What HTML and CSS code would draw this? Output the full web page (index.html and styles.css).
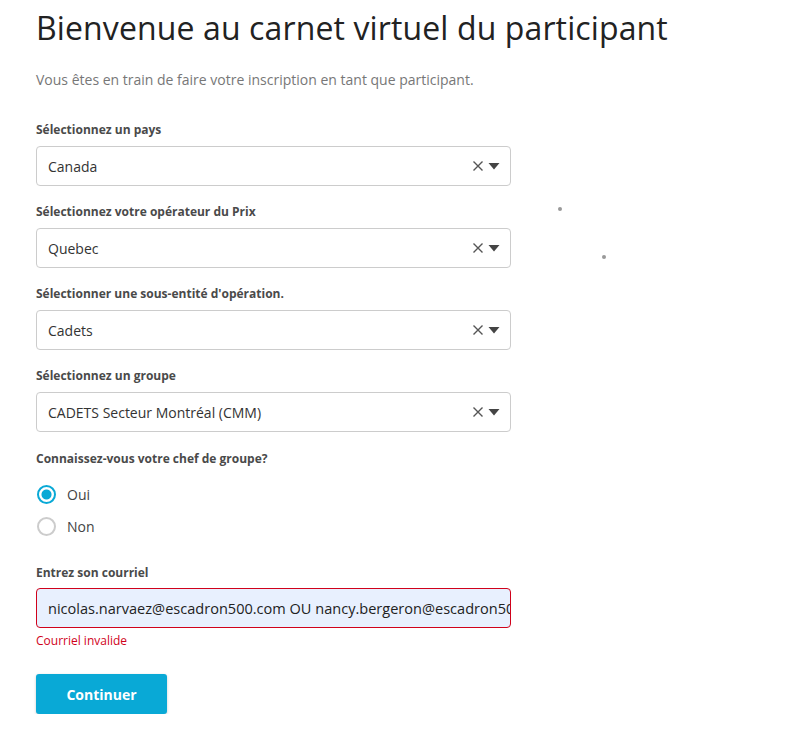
FILE: index.html
```html
<!DOCTYPE html>
<html lang="fr">
<head>
<meta charset="utf-8">
<title>Carnet virtuel</title>
<link rel="stylesheet" href="styles.css">
</head>
<body>
<main class="page">
  <h1 class="title">Bienvenue au carnet virtuel du participant</h1>
  <p class="intro">Vous êtes en train de faire votre inscription en tant que participant.</p>

  <div class="field">
    <label class="label">Sélectionnez un pays</label>
    <div class="select"><span class="value">Canada</span><span class="controls"><svg class="clear" width="12" height="12" viewBox="0 0 12 12"><path d="M1.5 1.5L10.5 10.5M10.5 1.5L1.5 10.5" stroke="#555" stroke-width="1.4"/></svg><svg class="caret" width="12" height="8" viewBox="0 0 12 8"><path d="M0.5 1H11.5L6 7.5Z" fill="#444"/></svg></span></div>
  </div>

  <div class="field">
    <label class="label">Sélectionnez votre opérateur du Prix</label>
    <div class="select"><span class="value">Quebec</span><span class="controls"><svg class="clear" width="12" height="12" viewBox="0 0 12 12"><path d="M1.5 1.5L10.5 10.5M10.5 1.5L1.5 10.5" stroke="#555" stroke-width="1.4"/></svg><svg class="caret" width="12" height="8" viewBox="0 0 12 8"><path d="M0.5 1H11.5L6 7.5Z" fill="#444"/></svg></span></div>
  </div>

  <div class="field">
    <label class="label">Sélectionner une sous-entité d'opération.</label>
    <div class="select"><span class="value">Cadets</span><span class="controls"><svg class="clear" width="12" height="12" viewBox="0 0 12 12"><path d="M1.5 1.5L10.5 10.5M10.5 1.5L1.5 10.5" stroke="#555" stroke-width="1.4"/></svg><svg class="caret" width="12" height="8" viewBox="0 0 12 8"><path d="M0.5 1H11.5L6 7.5Z" fill="#444"/></svg></span></div>
  </div>

  <div class="field">
    <label class="label">Sélectionnez un groupe</label>
    <div class="select"><span class="value">CADETS Secteur Montréal (CMM)</span><span class="controls"><svg class="clear" width="12" height="12" viewBox="0 0 12 12"><path d="M1.5 1.5L10.5 10.5M10.5 1.5L1.5 10.5" stroke="#555" stroke-width="1.4"/></svg><svg class="caret" width="12" height="8" viewBox="0 0 12 8"><path d="M0.5 1H11.5L6 7.5Z" fill="#444"/></svg></span></div>
  </div>

  <div class="field radios">
    <span class="label">Connaissez-vous votre chef de groupe?</span>
    <div class="radio checked"><span class="dot"></span><span>Oui</span></div>
    <div class="radio"><span class="dot"></span><span>Non</span></div>
  </div>

  <div class="field email">
    <label class="label">Entrez son courriel</label>
    <div class="input invalid"><span class="input-text">nicolas.narvaez@escadron500.com OU nancy.bergeron@escadron500.com</span></div>
    <div class="error">Courriel invalide</div>
  </div>

  <button class="btn">Continuer</button>

  <span class="speck s1"></span>
  <span class="speck s2"></span>
</main>
</body>
</html>
```

FILE: styles.css
```css
html, body {
  margin: 0;
  padding: 0;
  background: #fff;
}
body {
  font-family: "Open Sans", "Noto Sans", sans-serif;
  color: #333;
}
.page {
  position: relative;
  padding: 0 0 0 36px;
  width: 475px;
}
.title {
  margin: 0;
  padding-top: 6px;
  font-size: 32px;
  line-height: 44px;
  font-weight: 400;
  color: #222;
  white-space: nowrap;
  letter-spacing: 0.12px;
}
.intro {
  margin: 20px 0 0;
  font-size: 14px;
  line-height: 20px;
  color: #777;
}
.field {
  display: flex;
  flex-direction: column;
}
.intro + .field {
  margin-top: 31px;
}
.field + .field {
  margin-top: 17px;
}
.label {
  font-size: 12px;
  font-weight: 700;
  line-height: 18px;
  color: #4a4a4a;
  margin-bottom: 7px;
}
.select {
  box-sizing: border-box;
  height: 40px;
  border: 1px solid #ccc;
  border-radius: 4px;
  display: flex;
  align-items: center;
  justify-content: space-between;
  padding: 0 10px 0 11px;
  font-size: 14px;
  color: #333;
}
.controls {
  display: flex;
  align-items: center;
  gap: 4px;
}
.clear { display: block; }
.caret { display: block; }
.field.radios {
  margin-top: 18px;
}
.radios .label {
  margin-bottom: 10px;
}
.radio {
  display: flex;
  align-items: center;
  gap: 11px;
  height: 32px;
  font-size: 14px;
  color: #444;
}
.dot {
  box-sizing: border-box;
  width: 19px;
  height: 19px;
  border-radius: 50%;
  border: 2px solid #ccc;
  margin-left: 1px;
}
.radio.checked .dot {
  border-color: #09a9d6;
  background: radial-gradient(circle, #09a9d6 0 4.5px, #fff 5.5px);
}
.field.email {
  margin-top: 22px;
}
.email .label {
  margin-bottom: 6px;
}
.input {
  box-sizing: border-box;
  height: 40px;
  border: 1px solid #ccc;
  border-radius: 4px;
  display: flex;
  align-items: center;
  padding: 0 0 0 11px;
  overflow: hidden;
  font-size: 14.55px;
  color: #222;
}
.input.invalid {
  border-color: #d0021b;
  background: #e8f0fe;
}
.input-text {
  white-space: nowrap;
  overflow: hidden;
}
.error {
  font-size: 12px;
  line-height: 18px;
  color: #d0021b;
  margin-top: 4px;
}
.btn {
  margin-top: 24px;
  width: 131px;
  height: 40px;
  border: 0;
  border-radius: 3px;
  background: #09a9d6;
  color: #fff;
  font-family: inherit;
  font-size: 14px;
  font-weight: 700;
  box-shadow: 0 1px 3px rgba(0,0,0,0.2);
}
.speck {
  position: absolute;
  width: 4px;
  height: 4px;
  border-radius: 50%;
  background: #999;
}
.s1 { left: 558px; top: 207px; }
.s2 { left: 602px; top: 255px; }
```
